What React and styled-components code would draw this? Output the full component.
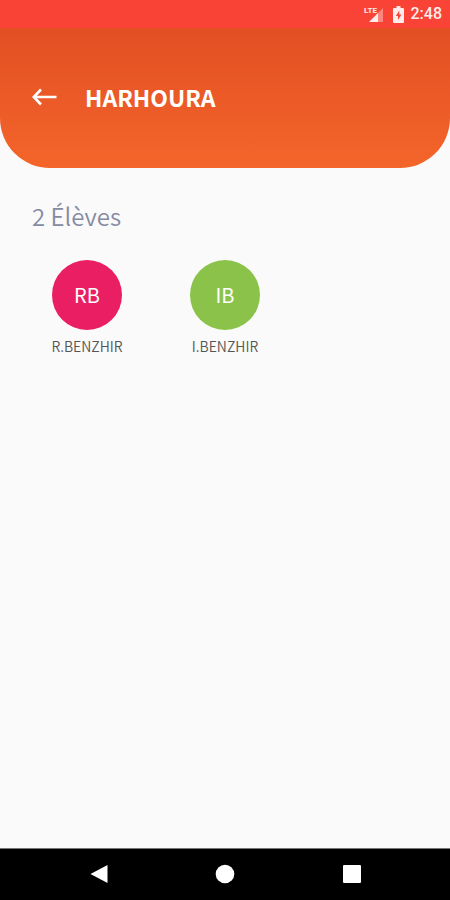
import React from 'react'
import styled, { createGlobalStyle } from 'styled-components'

const GlobalStyle = createGlobalStyle`
  * {
    box-sizing: border-box;
  }
  body {
    margin: 0;
    background: #fafafa;
    font-family: "Noto Sans CJK SC", "Open Sans", sans-serif;
  }
`

const Screen = styled.div`
  display: flex;
  flex-direction: column;
  min-height: 100vh;
`

const StatusBar = styled.div`
  display: flex;
  align-items: center;
  justify-content: flex-end;
  height: 28px;
  padding-right: 8px;
  background: #f94336;
  color: #ffeceb;
`

const Clock = styled.time`
  margin-left: 7px;
  font-family: Roboto, sans-serif;
  font-size: 16px;
  font-weight: 500;
  line-height: 28px;
`

const SignalIcon = styled.svg`
  font-family: Roboto, sans-serif;
  font-size: 8px;
  font-weight: 700;
`

const BatteryIcon = styled.svg`
  margin-left: 9px;
`

const HeaderWrap = styled.div`
  background: linear-gradient(#e24f24 50%, #fafafa 50%);
`

const Header = styled.header`
  display: flex;
  align-items: center;
  gap: 28px;
  height: 140px;
  padding: 0 32px 2px;
  border-radius: 0 0 50px 50px;
  background: linear-gradient(#e24f24, #f4652a);
  color: #fff;
`

const BackButton = styled.button`
  display: flex;
  padding: 0;
  border: 0;
  background: none;
  color: inherit;
  cursor: pointer;
`

const Title = styled.h1`
  margin: 0;
  font-size: 23px;
  font-weight: 700;
  line-height: 32px;
`

const Main = styled.main`
  flex: 1;
  padding: 32px 18px;
`

const Count = styled.h2`
  margin: 0 0 28px;
  padding-left: 14px;
  color: #858aa3;
  font-size: 24px;
  font-weight: 350;
  line-height: 32px;
`

const StudentList = styled.ul`
  display: grid;
  grid-template-columns: repeat(3, 1fr);
  margin: 0;
  padding: 0;
  list-style: none;
`

const Student = styled.li`
  display: flex;
  flex-direction: column;
  align-items: center;
  gap: 6px;
`

const Avatar = styled.div`
  display: flex;
  align-items: center;
  justify-content: center;
  width: 70px;
  height: 70px;
  border-radius: 50%;
  background: ${(props) => props.$color};
  color: #fff;
  font-size: 20px;
  line-height: 28px;
`

const Name = styled.span`
  color: #555;
  font-size: 14px;
  font-weight: 350;
  line-height: 20px;
`

const NavBar = styled.nav`
  display: flex;
  align-items: center;
  justify-content: center;
  gap: 103px;
  height: 52px;
  padding-bottom: 1px;
  border-top: 1px solid #777;
  background: #000;
`

const NavButton = styled.button`
  display: flex;
  padding: 0;
  border: 0;
  background: none;
  color: #fff;
  cursor: pointer;
`

const students = [
  { initials: 'RB', name: 'R.BENZHIR', color: '#e91e63' },
  { initials: 'IB', name: 'I.BENZHIR', color: '#8bc34a' },
]

export default function App() {
  return (
    <Screen>
      <GlobalStyle />
      <StatusBar>
        {/* mobile network + signal */}
        <SignalIcon width="20" height="18" viewBox="0 0 20 18">
          <path d="M19 3v14h-5V8z" fill="currentColor" opacity=".4" />
          <path d="M14 8v9H5z" fill="currentColor" />
          <text x="0" y="8" fill="currentColor">LTE</text>
        </SignalIcon>
        <BatteryIcon width="11" height="17" viewBox="0 0 11 17" role="img" aria-label="Batterie en charge">
          <path d="M3.5 0h4v2H10a1 1 0 0 1 1 1v13a1 1 0 0 1-1 1H1a1 1 0 0 1-1-1V3a1 1 0 0 1 1-1h2.500z" fill="currentColor" />
          <path d="M6.300 4.500 2.800 10H5v4l3.500-5.500H6.300z" fill="#f94336" />
        </BatteryIcon>
        <Clock>2:48</Clock>
      </StatusBar>

      <HeaderWrap>
        <Header>
          <BackButton type="button" aria-label="Retour">
            <svg width="25" height="18" viewBox="0 0 25 18" fill="none" stroke="currentColor" strokeWidth="2.6">
              <path d="M24.500 9H2M9 1.500 1.800 9 9 16.500" />
            </svg>
          </BackButton>
          <Title>HARHOURA</Title>
        </Header>
      </HeaderWrap>

      <Main>
        <Count>2 Élèves</Count>
        <StudentList>
          {students.map((student) => (
            <Student key={student.name}>
              <Avatar $color={student.color}>{student.initials}</Avatar>
              <Name>{student.name}</Name>
            </Student>
          ))}
        </StudentList>
      </Main>

      <NavBar>
        <NavButton type="button" aria-label="Retour">
          <svg width="24" height="20" viewBox="0 0 24 20">
            <path d="M21.500 1v18L4.500 10z" fill="currentColor" />
          </svg>
        </NavButton>
        <NavButton type="button" aria-label="Accueil">
          <svg width="24" height="20" viewBox="0 0 24 20">
            <circle cx="12" cy="10" r="9.300" fill="currentColor" />
          </svg>
        </NavButton>
        <NavButton type="button" aria-label="Applications récentes">
          <svg width="24" height="20" viewBox="0 0 24 20">
            <rect x="3" y="1" width="18" height="18" rx="1" fill="currentColor" />
          </svg>
        </NavButton>
      </NavBar>
    </Screen>
  )
}
